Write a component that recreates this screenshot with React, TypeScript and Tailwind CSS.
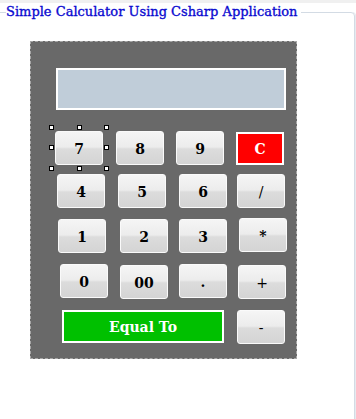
import React from "react";

const serif = "font-['DejaVu_Serif',serif]";
const grey =
  "h-[34px] w-[48px] shrink-0 rounded-[3px] border border-[#fafafa] bg-[linear-gradient(to_bottom,#f5f5f5_0%,#ececec_47%,#dcdcdc_53%,#d4d4d4_100%)] flex items-center justify-center pt-[2px] text-[14px] text-black";

function Handle({ cls }: { cls: string }) {
  return <span className={"absolute h-[5px] w-[5px] border border-black bg-white " + cls} />;
}

export default function App() {
  return (
    <div className={"min-h-[419px] w-[356px] bg-[#f0f0f0] pt-[3px] " + serif}>
      <div className="h-[416px] w-[356px] overflow-hidden bg-white">
        <fieldset className="ml-[-1px] h-[440px] w-[356px] rounded-tr-[4px] border border-[#d3dbe4] shadow-[1px_0_0_#e6eaef]">
          <legend className="ml-[6px] pr-[3px] text-[13px] leading-[18px] text-[#0a0ad0] [-webkit-text-stroke:0.35px_#0a0ad0]">
            Simple Calculator Using Csharp Application
          </legend>
          <div className="ml-[30px] mt-[20px] h-[318px] w-[267px] border border-dashed border-[#a8a8a8] bg-[#696969]">
            <div className="ml-[25px] mt-[26px] h-[42px] w-[230px] border-2 border-white bg-[#c0cdd9]" />

            {/* row 1 */}
            <div className="mt-[21px] flex items-start">
              <div className="relative ml-[24px]">
                <div className={grey + " font-bold"}>7</div>
                <Handle cls="left-[-6px] top-[-6px]" />
                <Handle cls="left-[22px] top-[-6px]" />
                <Handle cls="left-[49px] top-[-6px]" />
                <Handle cls="left-[-6px] top-[14px]" />
                <Handle cls="left-[49px] top-[14px]" />
                <Handle cls="left-[-6px] top-[35px]" />
                <Handle cls="left-[22px] top-[35px]" />
                <Handle cls="left-[49px] top-[35px]" />
              </div>
              <div className={grey + " ml-[13px] font-bold"}>8</div>
              <div className={grey + " ml-[12px] font-bold"}>9</div>
              <div className="ml-[12px] mt-[1px] flex h-[33px] w-[48px] items-center justify-center border-2 border-white bg-[#ff0000] pt-[2px] text-[14px] font-bold text-white">
                C
              </div>
            </div>

            {/* row 2 */}
            <div className="mt-[9px] flex items-start">
              <div className={grey + " ml-[26px] font-bold"}>4</div>
              <div className={grey + " ml-[13px] font-bold"}>5</div>
              <div className={grey + " ml-[13px] font-bold"}>6</div>
              <div className={grey + " ml-[10px] font-normal text-[12px] text-[#555]"}>/</div>
            </div>

            {/* row 3 */}
            <div className="mt-[10px] flex items-start">
              <div className={grey + " ml-[27px] mt-[1px] font-bold"}>1</div>
              <div className={grey + " ml-[14px] mt-[1px] font-bold"}>2</div>
              <div className={grey + " ml-[11px] mt-[1px] font-bold"}>3</div>
              <div className={grey + " ml-[12px] font-bold text-[13px]"}>*</div>
            </div>

            {/* row 4 */}
            <div className="mt-[11px] flex items-start">
              <div className={grey + " ml-[29px] font-bold"}>0</div>
              <div className={grey + " ml-[12px] mt-[1px] font-bold"}>00</div>
              <div className={grey + " ml-[11px] font-bold"}>.</div>
              <div className={grey + " ml-[11px] mt-[1px] font-normal text-[13px] text-[#555]"}>+</div>
            </div>

            {/* row 5 */}
            <div className="mt-[11px] flex items-start">
              <div className="ml-[31px] flex h-[33px] w-[162px] shrink-0 items-center justify-center border-2 border-white bg-[#00c000] pt-[2px] text-[14px] font-bold text-white">
                Equal To
              </div>
              <div className={grey + " ml-[13px] font-normal"}>-</div>
            </div>
          </div>
        </fieldset>
      </div>
    </div>
  );
}
